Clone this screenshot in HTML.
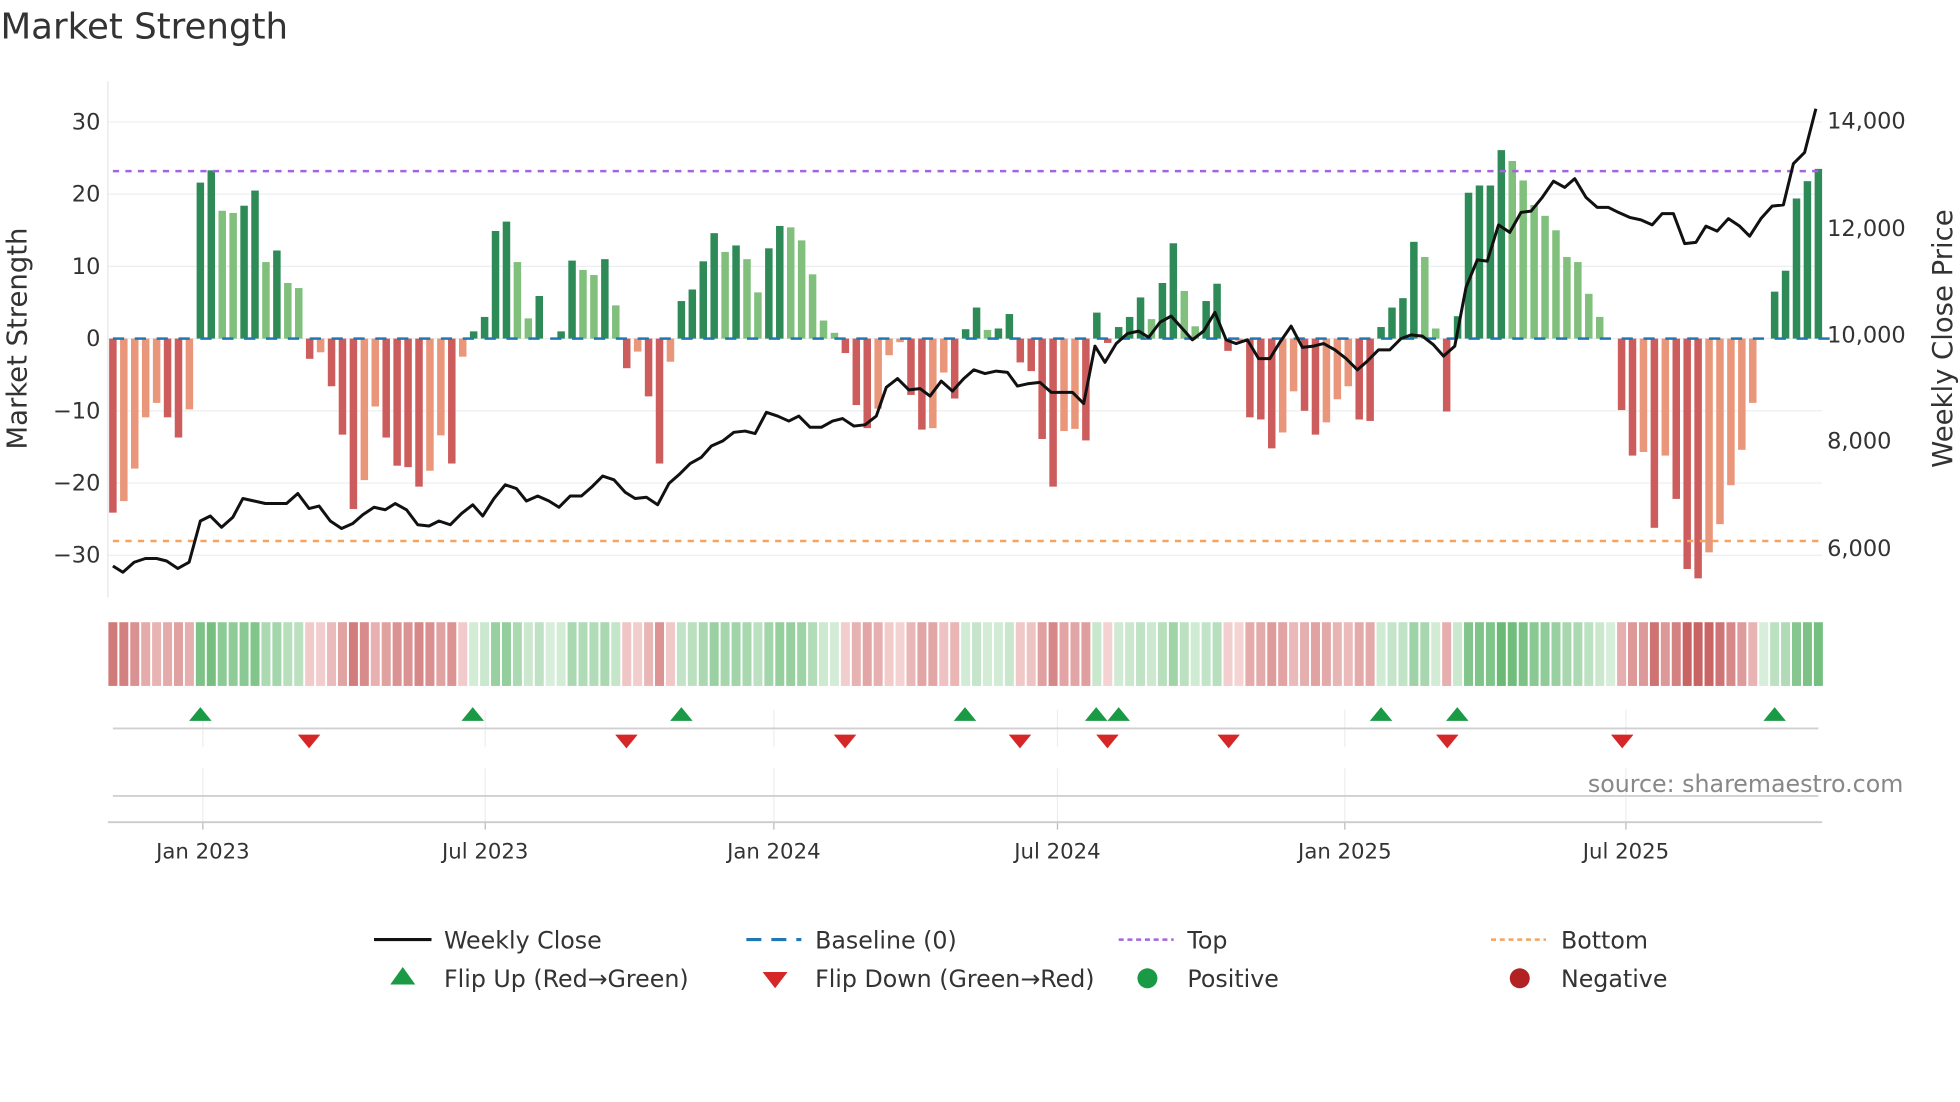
<!DOCTYPE html>
<html><head><meta charset="utf-8"><style>
html,body{margin:0;padding:0;background:#fff;width:1960px;height:1102px;overflow:hidden}
svg{display:block}
text{font-family:"DejaVu Sans","Liberation Sans",sans-serif;fill:#333}
</style></head><body>
<svg id="s" width="1960" height="1102" viewBox="0 0 1568 882" xmlns="http://www.w3.org/2000/svg">
<text x="0" y="31" font-size="28.5">Market Strength</text>
<g id="grid" stroke="#eceff2" stroke-width="1"></g>
<line x1="86" y1="65" x2="86" y2="478" stroke="#e6e6e6"/>
<g id="bars"></g>
<line x1="90" y1="137" x2="1458" y2="137" stroke="#a463e0" stroke-width="2" stroke-dasharray="5,5"/>
<line x1="90" y1="433" x2="1458" y2="433" stroke="#f4a460" stroke-width="2" stroke-dasharray="5,5"/>
<polyline id="price" fill="none" stroke="#111" stroke-width="2.4" stroke-linejoin="round"/>
<g id="heat"></g>
<g id="marks"></g>
<line x1="90" y1="583" x2="1455" y2="583" stroke="#d0d0d0" stroke-width="1.5"/>
<line x1="90" y1="637" x2="1455" y2="637" stroke="#d0d0d0" stroke-width="1.5"/>
<line x1="86" y1="658" x2="1458" y2="658" stroke="#ccc" stroke-width="1.5"/>
<text x="1523" y="634" font-size="19" fill="#888" text-anchor="end" style="fill:#888">source: sharemaestro.com</text>
<g font-size="18" text-anchor="end" id="yl"></g>
<g font-size="18" id="yr"></g>
<text transform="translate(21,271) rotate(-90)" font-size="22" text-anchor="middle">Market Strength</text>
<text transform="translate(1562,271) rotate(-90)" font-size="22" text-anchor="middle">Weekly Close Price</text>
<g id="xl" font-size="17" text-anchor="middle"></g>
<g font-size="19">
<line x1="299" y1="752" x2="345" y2="752" stroke="#111" stroke-width="2.5"/>
<text x="355" y="759">Weekly Close</text>
<line x1="597" y1="752" x2="641" y2="752" stroke="#1f77b4" stroke-width="2.5" stroke-dasharray="12,8"/>
<text x="652" y="759">Baseline (0)</text>
<line x1="895" y1="752" x2="939" y2="752" stroke="#a463e0" stroke-width="2" stroke-dasharray="4,3"/>
<text x="950" y="759">Top</text>
<line x1="1193" y1="752" x2="1237" y2="752" stroke="#f4a460" stroke-width="2" stroke-dasharray="4,3"/>
<text x="1249" y="759">Bottom</text>
<polygon points="312,788 332,788 322,774" fill="#1a9a45"/>
<text x="355" y="790">Flip Up (Red→Green)</text>
<polygon points="610,778 630,778 620,791" fill="#d62728"/>
<text x="652" y="790">Flip Down (Green→Red)</text>
<circle cx="918" cy="783" r="8" fill="#1a9a45"/>
<text x="950" y="790">Positive</text>
<circle cx="1216" cy="783" r="8" fill="#b22222"/>
<text x="1249" y="790">Negative</text>
</g>
</svg>
<script>
var NS="http://www.w3.org/2000/svg";
function el(p,t,a){var e=document.createElementNS(NS,t);for(var k in a)e.setAttribute(k,a[k]);p.appendChild(e);return e;}
var g=document.getElementById('grid');
[-30,-20,-10,0,10,20,30].forEach(function(v){var y=271-v*5.78;el(g,'line',{x1:86,y1:y,x2:1458,y2:y});
 var t=el(document.getElementById('yl'),'text',{x:80,y:y+6});t.textContent=(v<0?'−'+(-v):v);});
[[14000,97],[12000,183],[10000,268],[8000,353],[6000,439]].forEach(function(p){var t=el(document.getElementById('yr'),'text',{x:1462,y:p[1]+6});t.textContent=p[0].toLocaleString('en-US');});
var V="-24.1d -22.5l -18l -10.9l -8.9l -10.9d -13.7d -9.8l 21.6d 23.3d 17.7l 17.4l 18.4d 20.5d 10.6l 12.2d 7.7l 7l -2.8d -1.9l -6.6d -13.3d -23.6d -19.6l -9.4l -13.7d -17.6d -17.8d -20.5d -18.3l -13.4l -17.3d -2.5l 1d 3d 14.9d 16.2d 10.6l 2.8l 5.9d 0z 1d 10.8d 9.5l 8.8l 11d 4.6l -4.1d -1.8l -8d -17.3d -3.2l 5.2d 6.8d 10.7d 14.6d 12l 12.9d 11l 6.4l 12.5d 15.6d 15.4l 13.6l 8.9l 2.5l 0.8l -2d -9.2d -12.4d -9.7l -2.3l -0.5l -7.8d -12.6d -12.4l -4.7l -8.3d 1.3d 4.3d 1.2l 1.4d 3.4d -3.3d -4.5d -13.9d -20.5d -12.8l -12.5l -14.1d 3.6d -0.6d 1.6d 3d 5.7d 2.7l 7.7d 13.2d 6.6l 1.7l 5.2d 7.6d -1.7d -0.3l -10.9d -11.2d -15.2d -13l -7.3l -10d -13.3d -11.6l -8.4l -6.6l -11.2d -11.4d 1.6d 4.3d 5.6d 13.4d 11.3l 1.4l -10.1d 3.1d 20.2d 21.2d 21.2d 26.1d 24.6l 21.9l 18.5l 17l 15l 11.3l 10.6l 6.2l 3l 0z -9.9d -16.2d -15.7l -26.2d -16.2l -22.2d -31.9d -33.2d -29.6l -25.7l -20.3l -15.4l -8.9l 0z 6.5d 9.4d 19.4d 21.8d 23.5d".split(' ');
var B=document.getElementById('bars'),H=document.getElementById('heat');
V.forEach(function(s,i){var v=parseFloat(s),f=s.slice(-1),x=90+i*8.75;
 var c=v>0?(f=='d'?'#2e8b57':'#80c07c'):(f=='d'?'#cd5c5c':'#e9967a');
 if(v!=0){var h=Math.abs(v)*5.78;el(B,'rect',{x:x-3,y:v>0?271-h:271,width:6,height:h,fill:c});}
 var a=Math.min(1,Math.abs(v)/30),col;
 if(v>=0){col='rgb('+Math.round(215-125*a)+','+Math.round(238-60*a)+','+Math.round(218-115*a)+')';}
 else{col='rgb('+Math.round(245-45*a)+','+Math.round(212-112*a)+','+Math.round(212-112*a)+')';}
 el(H,'rect',{x:x-3.6,y:498,width:7.2,height:51,fill:col});
});
for(var x=90;x<1458;x+=17.5){el(B,'line',{x1:x,y1:271,x2:x+9,y2:271,stroke:'#1f77b4','stroke-width':2});}
var P="90 453 98 458 107 450 116 447 125 447 133 449 142 455 151 450 160 417 168 413 177 422 186 414 194 399 203 401 212 403 220 403 229 403 238 395 247 407 255 405 264 417 273 423 282 419 290 412 299 406 308 408 316 403 325 408 334 420 343 421 351 417 360 420 369 411 378 404 386 413 395 399 404 388 413 391 421 401 430 397 439 401 447 406 456 397 465 397 473 390 482 381 491 384 500 394 508 399 517 398 526 404 535 387 543 380 552 371 561 366 569 357 578 353 587 346 596 345 604 347 613 330 622 333 631 337 639 333 648 342 657 342 666 337 674 335 683 341 692 340 701 333 709 310 718 303 727 312 736 311 744 317 753 305 762 313 771 303 779 296 788 299 797 297 806 298 814 309 823 307 832 306 841 314 849 314 858 314 867 323 876 277 884 290 893 275 902 267 911 265 919 270 928 258 937 253 946 263 954 272 963 265 972 250 981 272 989 275 998 272 1007 287 1016 287 1024 274 1033 261 1042 278 1051 277 1059 275 1068 280 1077 287 1086 296 1094 289 1103 280 1112 280 1121 271 1129 268 1138 269 1147 276 1155 285 1164 277 1173 230 1182 208 1190 209 1199 180 1208 186 1217 170 1225 169 1234 158 1243 145 1252 150 1260 143 1269 158 1278 166 1287 166 1295 170 1304 174 1313 176 1322 180 1330 171 1339 171 1348 195 1357 194 1365 181 1374 185 1383 175 1392 181 1400 189 1409 175 1418 165 1427 164 1435 131 1444 122 1453 87".split(' ');
var pts=[];for(var i=0;i<P.length;i+=2)pts.push(P[i]+','+P[i+1]);document.getElementById('price').setAttribute('points',pts.join(' '));
var M=document.getElementById('marks');
[[162,'Jan 2023'],[388,'Jul 2023'],[619,'Jan 2024'],[846,'Jul 2024'],[1076,'Jan 2025'],[1301,'Jul 2025']].forEach(function(p){
 el(M,'line',{x1:p[0],y1:568,x2:p[0],y2:598,stroke:'#eee'});el(M,'line',{x1:p[0],y1:615,x2:p[0],y2:658,stroke:'#eee'});
 el(M,'line',{x1:p[0],y1:658,x2:p[0],y2:664,stroke:'#bbb'});
 var t=el(document.getElementById('xl'),'text',{x:p[0],y:687});t.textContent=p[1];});
[160,378,545,772,877,895,1105,1166,1420].forEach(function(x){el(M,'polygon',{points:(x-9)+',577 '+(x+9)+',577 '+x+',566',fill:'#1a9a45'});});
[247,501,676,816,886,983,1158,1298].forEach(function(x){el(M,'polygon',{points:(x-9)+',588 '+(x+9)+',588 '+x+',599',fill:'#d62728'});});
</script>
</body></html>
